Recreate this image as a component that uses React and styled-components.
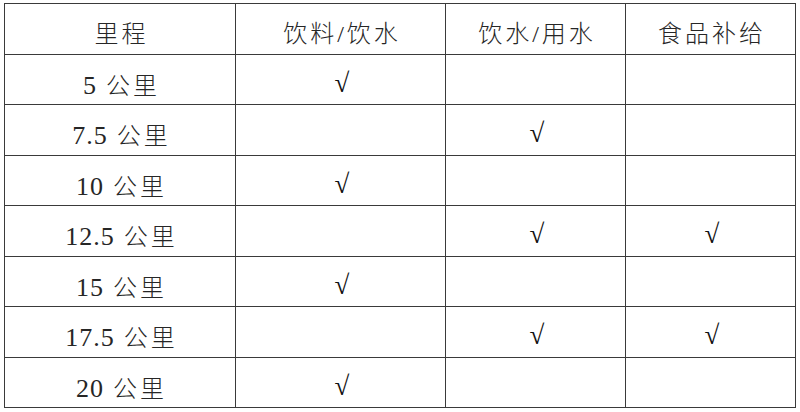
import React from 'react';
import styled, { createGlobalStyle } from 'styled-components';

const rows = [
  { km: '5', drink: true, water: false, food: false },
  { km: '7.5', drink: false, water: true, food: false },
  { km: '10', drink: true, water: false, food: false },
  { km: '12.5', drink: false, water: true, food: true },
  { km: '15', drink: true, water: false, food: false },
  { km: '17.5', drink: false, water: true, food: true },
  { km: '20', drink: true, water: false, food: false },
];

const App = () => {
  return (
    <>
      <GlobalStyle />
      <Page>
        <Table>
          <colgroup>
            <col style={{ width: 231 }} />
            <col style={{ width: 210 }} />
            <col style={{ width: 180 }} />
            <col style={{ width: 170 }} />
          </colgroup>
          <thead>
            <tr>
              <HeadCell>里程</HeadCell>
              <HeadCell>饮料/饮水</HeadCell>
              <HeadCell>饮水/用水</HeadCell>
              <HeadCell>食品补给</HeadCell>
            </tr>
          </thead>
          <tbody>
            {rows.map((r) => (
              <tr key={r.km}>
                <Cell>
                  <Num>{r.km}</Num> 公里
                </Cell>
                <Cell>{r.drink && <Check>√</Check>}</Cell>
                <Cell>{r.water && <Check>√</Check>}</Cell>
                <Cell>{r.food && <Check>√</Check>}</Cell>
              </tr>
            ))}
          </tbody>
        </Table>
      </Page>
    </>
  );
};

const GlobalStyle = createGlobalStyle`
  html, body {
    margin: 0;
    padding: 0;
    background: #ffffff;
  }
`;

const Page = styled.div`
  padding: 3px 4px;
  font-family: 'Liberation Serif', 'Noto Sans CJK SC', serif;
  color: #262626;
`;

const Table = styled.table`
  border-collapse: collapse;
  table-layout: fixed;
  width: 792px;

  tr {
    height: 50.5px;
  }
`;

const HeadCell = styled.th`
  border: 1.5px solid #3a3a3a;
  font-weight: 300;
  font-size: 24px;
  letter-spacing: 3px;
  text-align: center;
  vertical-align: middle;
  padding: 6px 0 0 3px;
`;

const Cell = styled.td`
  border: 1.5px solid #3a3a3a;
  font-weight: 300;
  font-size: 24px;
  letter-spacing: 3px;
  text-align: center;
  vertical-align: middle;
  padding: 8px 0 0 3px;
`;

const Num = styled.span`
  font-family: 'Liberation Serif', serif;
  font-weight: 400;
  font-size: 26px;
  letter-spacing: 1px;
`;

const Check = styled.span`
  font-family: 'Liberation Serif', 'DejaVu Serif', serif;
  font-weight: 400;
  font-size: 27px;
  letter-spacing: 0;
  color: #111;
`;

export default App;
